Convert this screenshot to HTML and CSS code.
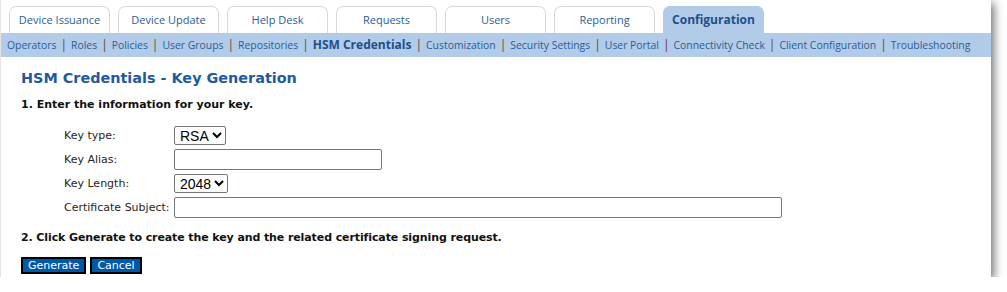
FILE: index.html
```html
<!DOCTYPE html>
<html>
<head>
<meta charset="utf-8">
<link rel="stylesheet" href="styles.css">
</head>
<body>
<div class="frame">
  <nav class="tabs">
    <a class="tab">Device Issuance</a>
    <a class="tab">Device Update</a>
    <a class="tab">Help Desk</a>
    <a class="tab">Requests</a>
    <a class="tab">Users</a>
    <a class="tab">Reporting</a>
    <a class="tab active">Configuration</a>
  </nav>
  <div class="subnav">
    <a>Operators</a><span class="sep">|</span><a>Roles</a><span class="sep">|</span><a>Policies</a><span class="sep">|</span><a>User Groups</a><span class="sep">|</span><a>Repositories</a><span class="sep">|</span><a class="current">HSM Credentials</a><span class="sep">|</span><a>Customization</a><span class="sep">|</span><a>Security Settings</a><span class="sep">|</span><a>User Portal</a><span class="sep purple">|</span><a>Connectivity Check</a><span class="sep">|</span><a>Client Configuration</a><span class="sep">|</span><a>Troubleshooting</a>
  </div>
  <main class="content">
    <h1 class="title">HSM Credentials - Key Generation</h1>
    <p class="step">1. Enter the information for your key.</p>
    <div class="form">
      <label class="lbl">Key type:</label>
      <div class="field"><select class="sel sel-type"><option>RSA</option></select></div>
      <label class="lbl">Key Alias:</label>
      <div class="field"><input class="inp inp-alias" type="text"></div>
      <label class="lbl">Key Length:</label>
      <div class="field"><select class="sel sel-len"><option>2048</option></select></div>
      <label class="lbl">Certificate Subject:</label>
      <div class="field"><input class="inp inp-subject" type="text"></div>
    </div>
    <p class="step step2">2. Click Generate to create the key and the related certificate signing request.</p>
    <div class="buttons">
      <button class="btn">Generate</button>
      <button class="btn">Cancel</button>
    </div>
  </main>
</div>
</body>
</html>
```

FILE: styles.css
```css
html, body {
  margin: 0;
  padding: 0;
  background: #ffffff;
}
.frame {
  width: 991px;
  height: 277px;
  background: #ffffff;
  box-shadow: 3px 3px 9px rgba(0, 0, 0, 0.55);
  border-left: 1px solid #e4e4e4;
  box-sizing: border-box;
  overflow: hidden;
}
.tabs {
  display: flex;
  gap: 8px;
  padding: 6px 0 0 8px;
  height: 27px;
}
.tab {
  width: 101px;
  box-sizing: border-box;
  border: 1px solid #d9d9d9;
  border-bottom: none;
  border-radius: 7px 7px 0 0;
  font-family: "Open Sans", sans-serif;
  font-size: 11px;
  color: #2b5d98;
  text-align: center;
  line-height: 26px;
  background: #ffffff;
}
.tab.active {
  background: #b1cbe8;
  border-color: #b1cbe8;
  font-weight: bold;
  font-size: 12px;
  color: #1d4f8c;
  line-height: 26px;
}
.subnav {
  background: #b1cbe8;
  height: 24px;
  line-height: 24px;
  padding-left: 6px;
  font-family: "Open Sans", sans-serif;
  font-size: 10.4px;
  color: #2b5d98;
  white-space: nowrap;
}
.subnav .current {
  font-weight: bold;
  font-size: 12px;
  color: #1d4f8c;
}
.subnav .sep {
  color: #5a4a2a;
  margin: 0 4px;
  font-size: 12px;
}
.subnav .sep.purple {
  color: #6a2a6a;
}
.content {
  padding: 0 0 0 20px;
}
.title {
  margin: 11px 0 0 0;
  font-family: "DejaVu Sans", Verdana, sans-serif;
  font-size: 14.4px;
  font-weight: bold;
  color: #1f5b9b;
  line-height: 20px;
}
.step {
  margin: 10px 0 0 0;
  font-family: "DejaVu Sans", Verdana, sans-serif;
  font-size: 11px;
  font-weight: bold;
  color: #111111;
  line-height: 14px;
}
.step2 {
  margin-top: 14px;
  letter-spacing: -0.1px;
}
.form {
  display: grid;
  grid-template-columns: 111px auto;
  grid-auto-rows: 20px;
  row-gap: 4px;
  margin: 13px 0 0 43px;
  align-items: center;
}
.lbl {
  font-family: "DejaVu Sans", Verdana, sans-serif;
  font-size: 11px;
  color: #2a2418;
}
.field {
  display: flex;
  height: 20px;
  align-items: center;
  margin-left: -1px;
}
.sel {
  font-family: "Liberation Sans", Arial, sans-serif;
  font-size: 14px;
  height: 19px;
  padding: 0 0 0 1px;
  border: 1px solid #767676;
  border-radius: 2px;
  background: #ffffff;
  color: #000;
}
.sel-type { width: 52px; }
.sel-len { width: 54px; }
.inp {
  height: 21px;
  box-sizing: border-box;
  border: 1px solid #767676;
  border-radius: 2px;
  padding: 0 2px;
}
.inp-alias { width: 208px; }
.inp-subject { width: 608px; }
.buttons {
  display: flex;
  gap: 4px;
  margin-top: 12px;
}
.btn {
  height: 17px;
  box-sizing: border-box;
  border: 2px solid #000000;
  background: #0059a8;
  color: #ffffff;
  font-family: "DejaVu Sans", Tahoma, sans-serif;
  font-size: 11px;
  line-height: 12px;
  padding: 0 5px;
  border-radius: 0;
}
```
